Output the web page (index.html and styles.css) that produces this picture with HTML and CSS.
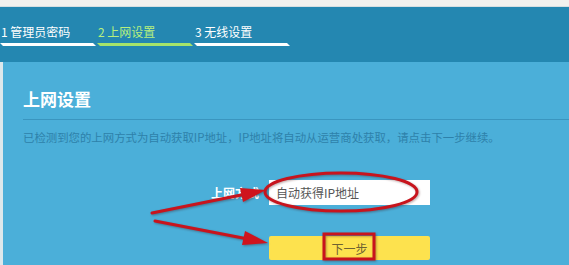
FILE: index.html
```html
<!DOCTYPE html>
<html lang="zh-CN">
<head>
    <meta charset="UTF-8">
    <title>上网设置</title>
    <link rel="stylesheet" href="styles.css">
</head>
<body>

    <div class="top-strip"></div>

    <!-- шаги мастера -->
    <div class="steps">
        <div class="step">
            <span class="step-text">1 管理员密码</span>
            <span class="step-bar"></span>
        </div>
        <div class="step active">
            <span class="step-text">2 上网设置</span>
            <span class="step-bar"></span>
        </div>
        <div class="step">
            <span class="step-text">3 无线设置</span>
            <span class="step-bar"></span>
        </div>
    </div>

    <div class="content">
        <h2>上网设置</h2>
        <p class="hint">已检测到您的上网方式为自动获取IP地址，IP地址将自动从运营商处获取，请点击下一步继续。</p>

        <div class="form-row">
            <label>上网方式</label>
            <div class="field">自动获得IP地址</div>
        </div>
        <div class="form-row">
            <span></span>
            <button class="next-btn">下一步</button>
        </div>
    </div>

    <!-- красные пометки поверх скриншота -->
    <svg class="marks" width="569" height="265" viewBox="0 0 569 265">
        <g fill="none" stroke="#c8141d" stroke-width="3" stroke-linecap="round">
            <line x1="152" y1="213" x2="246" y2="194"/>
            <line x1="155" y1="221" x2="248" y2="239"/>
            <ellipse cx="341" cy="192" rx="76" ry="19"/>
            <rect x="324" y="234" width="50" height="25"/>
        </g>
        <g fill="#cf141d">
            <polygon points="266,190 243,202 240,188"/>
            <polygon points="268,243 242,245 245,231"/>
        </g>
    </svg>

</body>
</html>
```

FILE: styles.css
```css
body {
    margin: 0;
    padding: 0;
    width: 569px;
    height: 265px;
    overflow: hidden;
    background-color: #4bafd9;
    font-family: "Microsoft YaHei", "Noto Sans CJK SC", sans-serif;
    position: relative;
}

.top-strip {
    height: 6px;
    background-color: #f1f1ef;
    border-bottom: 1px solid #d6dfe2;
}

/* полоса с шагами */
.steps {
    height: 55px;
    background-color: #2487b1;
    display: flex;
    box-sizing: border-box;
    padding-top: 17px;
}

.step {
    width: 97px;
    display: flex;
    flex-direction: column;
}

.step-text {
    color: #ffffff;
    font-size: 12px;
    line-height: 16px;
    padding-left: 1px;
    white-space: nowrap;
}

.step-bar {
    display: block;
    height: 3px;
    margin-top: 3px;
    width: 96px;
    background-color: #ffffff;
    clip-path: polygon(0 0, calc(100% - 3px) 0, 100% 100%, 3px 100%);
}

.step.active .step-text {
    color: #b6f07e;
}

.step.active .step-bar {
    background-color: #a6e46a;
}

.content {
    border-left: 3px solid #dce8ec;
    height: 203px;
    box-sizing: border-box;
    padding: 26px 0 0 20px;
}

.content h2 {
    margin: 0;
    color: #ffffff;
    font-size: 17px;
    font-weight: bold;
    line-height: 22px;
    padding-bottom: 9px;
    border-bottom: 1px solid #3a95bf;
}

.hint {
    margin: 8px 0 0;
    color: #2e81aa;
    font-size: 11.4px;
    line-height: 18px;
    white-space: nowrap;
}

.form-row {
    display: grid;
    grid-template-columns: 246px 161px;
    align-items: center;
}

.form-row:first-of-type {
    margin-top: 34px;
}

.form-row + .form-row {
    margin-top: 31px;
}

.form-row label {
    color: #ffffff;
    font-size: 12px;
    font-weight: bold;
    text-align: right;
    padding-right: 10px;
}

.field {
    height: 25px;
    background-color: #ffffff;
    color: #555555;
    font-size: 12px;
    line-height: 25px;
    padding-left: 7px;
}

.next-btn {
    height: 24px;
    border: none;
    border-radius: 2px;
    background-color: #fde24e;
    color: #6e6232;
    font-size: 12px;
    font-family: inherit;
    padding: 0;
}

.marks {
    position: absolute;
    top: 0;
    left: 0;
    filter: drop-shadow(1px 1px 1px rgba(60, 0, 0, 0.35));
}
```
